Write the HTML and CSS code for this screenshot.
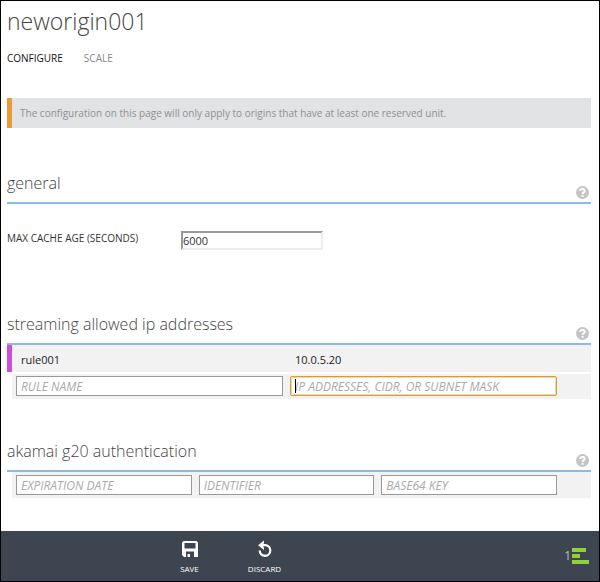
FILE: index.html
```html
<!DOCTYPE html>
<html lang="en">
<head>
<meta charset="utf-8">
<meta name="viewport" content="width=device-width, initial-scale=1">
<title>neworigin001</title>
<link rel="stylesheet" href="styles.css">
</head>
<body>
<main class="content">
  <h1 class="title">neworigin001</h1>
  <nav class="tabs">
    <a class="tab tab-active" href="#configure">CONFIGURE</a>
    <a class="tab" href="#scale">SCALE</a>
  </nav>
  <p class="notice">The configuration on this page will only apply to origins that have at least one reserved unit.</p>

  <section class="section">
    <header class="section-head">
      <h2>general</h2>
      <button class="help" type="button" aria-label="Help"><svg viewBox="0 0 13 13"><circle cx="6.500" cy="6.500" r="6.500" fill="#c4c4c4"/><path d="M4.200 5C4.200 2.200 8.800 2.200 8.800 4.800C8.800 6.200 6.600 6.200 6.600 8M6.600 8.900V10.800" fill="none" stroke="#fff" stroke-width="2"/></svg></button>
    </header>
    <div class="field">
      <label for="cache">MAX CACHE AGE (SECONDS)</label>
      <input class="cache" id="cache" type="text" value="6000">
    </div>
  </section>

  <section class="section section-rules">
    <header class="section-head">
      <h2>streaming allowed ip addresses</h2>
      <button class="help" type="button" aria-label="Help"><svg viewBox="0 0 13 13"><circle cx="6.500" cy="6.500" r="6.500" fill="#c4c4c4"/><path d="M4.200 5C4.200 2.200 8.800 2.200 8.800 4.800C8.800 6.200 6.600 6.200 6.600 8M6.600 8.900V10.800" fill="none" stroke="#fff" stroke-width="2"/></svg></button>
    </header>
    <table class="rules">
      <colgroup><col class="col-mark"><col><col><col class="col-end"></colgroup>
      <tbody>
        <tr class="rule">
          <td class="mark"></td><td class="rule-text">rule001</td><td class="rule-text">10.0.5.20</td><td></td>
        </tr>
      </tbody>
      <tbody>
        <tr class="gap"><td colspan="4"></td></tr>
        <tr class="new-rule">
          <td></td>
          <td><input class="box" type="text" placeholder="RULE NAME" aria-label="Rule name"></td>
          <td><div class="focus-wrap"><input class="box box-focus" type="text" placeholder="IP ADDRESSES, CIDR, OR SUBNET MASK" aria-label="IP addresses, CIDR, or subnet mask"><span class="caret"></span></div></td>
          <td></td>
        </tr>
      </tbody>
    </table>
  </section>

  <section class="section section-keys">
    <header class="section-head">
      <h2>akamai g20 authentication</h2>
      <button class="help" type="button" aria-label="Help"><svg viewBox="0 0 13 13"><circle cx="6.500" cy="6.500" r="6.500" fill="#c4c4c4"/><path d="M4.200 5C4.200 2.200 8.800 2.200 8.800 4.800C8.800 6.200 6.600 6.200 6.600 8M6.600 8.900V10.800" fill="none" stroke="#fff" stroke-width="2"/></svg></button>
    </header>
    <div class="keys">
      <input class="box" type="text" placeholder="EXPIRATION DATE" aria-label="Expiration date">
      <input class="box" type="text" placeholder="IDENTIFIER" aria-label="Identifier">
      <input class="box" type="text" placeholder="BASE64 KEY" aria-label="Base64 key">
    </div>
  </section>
</main>

<footer class="bar">
  <div class="commands">
    <button class="command" type="button">
      <svg viewBox="0 0 18 18"><path fill="#fff" fill-rule="evenodd" d="M2.500 1H15.500L17 2.500V17H3L1 15V2.500ZM3.500 3V8.500H14.500V3ZM5 11.500V17H6.500V14H9V17H13V11.500Z"/></svg>
      SAVE
    </button>
    <button class="command" type="button">
      <svg viewBox="0 0 18 18"><path d="M6 5.200H9.500A5.300 5.300 0 1 1 3.700 10.500" fill="none" stroke="#fff" stroke-width="2.300"/><path d="M2 5.200L8 .5V3L6.500 5.200L8 7.500V10Z" fill="#fff"/></svg>
      DISCARD
    </button>
  </div>
  <button class="jobs" type="button" aria-label="1 notification">
    <span>1</span>
    <svg viewBox="0 0 17 17"><path d="M0 0H14V4H0ZM0 6H8V10H0ZM0 12H17V16H0Z" fill="#92d13d"/></svg>
  </button>
</footer>
</body>
</html>
```
FILE: styles.css
```css
* {
  box-sizing: border-box;
}

body {
  display: flex;
  flex-direction: column;
  min-height: 100vh;
  margin: 0;
  border: 1px solid #000;
  background: #fff;
  color: #333;
  font-family: "Open Sans", "Noto Sans", sans-serif;
  font-size: 11px;
  line-height: 16px;
}

button,
input {
  font: inherit;
}

button {
  padding: 0;
  border: 0;
  background: none;
}

h1,
h2,
p {
  margin: 0;
}

.content {
  flex: 1;
  padding: 4px 8px 0 6px;
}

.title {
  color: #444;
  font-size: 23px;
  font-weight: 300;
  line-height: 32px;
}

.tabs {
  display: flex;
  gap: 21px;
  margin-top: 13px;
  font-size: 10px;
}

.tab {
  color: #888;
  text-decoration: none;
}

.tab-active {
  color: #111;
}

.notice {
  margin-top: 32px;
  padding: 7px 8px;
  border-left: 5px solid #e89b35;
  background: #e1e3e5;
  color: #909090;
  font-size: 10px;
  font-weight: 500;
}

.section {
  margin-top: 42px;
}

.section-head {
  display: flex;
  align-items: flex-end;
  justify-content: space-between;
  height: 34px;
  border-bottom: 2px solid #8abbe3;
}

.section-head h2 {
  padding-bottom: 7px;
  color: #444;
  font-size: 16px;
  font-weight: 300;
  line-height: 24px;
}

.help {
  margin: 0 2px 3px 0;
}

.help svg {
  display: block;
  width: 13px;
  height: 13px;
}

.field {
  display: flex;
  align-items: flex-start;
  margin-top: 26px;
}

.field label {
  width: 174px;
  font-size: 10px;
}

.cache {
  width: 142px;
  height: 19px;
  margin-top: 1px;
  padding: 0;
  border: 2px solid;
  border-color: #999 #eee #eee #999;
  color: #333;
}

.section-rules {
  margin-top: 61px;
}

.rules {
  width: 100%;
  border-collapse: collapse;
  table-layout: fixed;
}

.rules td {
  padding: 0;
}

.col-mark {
  width: 5px;
}

.col-end {
  width: 31px;
}

.rule {
  height: 27px;
  background: #f2f2f2;
  color: #222;
}

.rules .mark {
  background: #cc4fdc;
}

.rules .rule-text {
  padding: 2px 9px 0;
}

.gap {
  height: 2px;
}

.new-rule td {
  padding: 2px 3px 3px 4px;
  background: #f2f2f2;
}

.new-rule td:first-child {
  background: #fff;
}

.box {
  display: block;
  width: 100%;
  min-width: 0;
  height: 20px;
  padding: 1px 4px 0;
  border: 1px solid #999;
  border-radius: 0;
  background: #fff;
  font-size: 12px;
}

.box::placeholder {
  color: #aaa;
  font-style: italic;
  opacity: 1;
}

.box-focus {
  border-color: #d69b3a;
  border-radius: 2px;
  outline: 1px solid #f1d8a8;
  outline-offset: -2px;
}

.focus-wrap {
  position: relative;
}

.caret {
  position: absolute;
  top: 3px;
  left: 5px;
  width: 1px;
  height: 14px;
  background: #000;
}

.section-keys {
  margin-top: 39px;
}

.keys {
  display: grid;
  grid-template-columns: repeat(3, 1fr);
  gap: 7px;
  margin-left: 5px;
  padding: 3px 34px 3px 4px;
  background: #f2f2f2;
}

.bar {
  display: flex;
  align-items: center;
  justify-content: space-between;
  height: 50px;
  padding-right: 10px;
  background: #3d4550;
  color: #fff;
}

.commands {
  display: flex;
  margin-left: 151px;
}

.command {
  width: 75px;
  color: #fff;
  font-size: 8px;
  line-height: 12px;
}

.command svg {
  display: block;
  width: 18px;
  height: 18px;
  margin: 2px auto 5px;
}

.jobs {
  display: flex;
  align-items: center;
  gap: 1px;
  color: #b8bec5;
  font-size: 12px;
}

.jobs svg {
  width: 17px;
  height: 17px;
}
```
